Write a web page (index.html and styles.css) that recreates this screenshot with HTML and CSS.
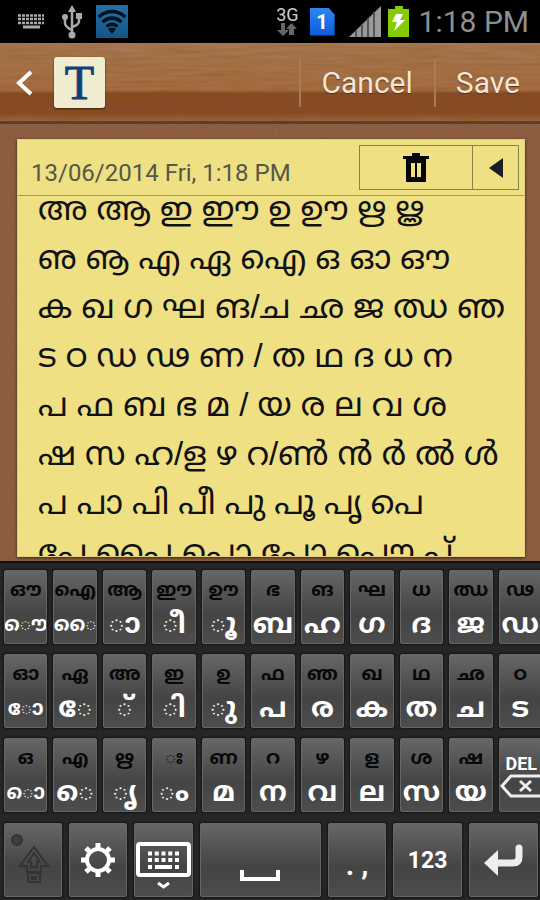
FILE: index.html
```html
<!DOCTYPE html>
<html lang="ml">
<head>
  <meta charset="UTF-8">
  <meta name="viewport" content="width=device-width, initial-scale=1.0">
  <title>Memo</title>
  <link rel="stylesheet" href="styles.css">
</head>
<body>
  <!-- Status bar -->
  <div class="status">
    <svg width="28" height="16" viewBox="0 0 28 16" fill="none" stroke="#aaa">
      <path d="M1 1.5h26M1 5h26M1 9h26" stroke-width="2.5" stroke-dasharray="3 1"/>
      <path d="M6 13h17" stroke-width="3"/>
    </svg>
    <svg class="usb" width="20" height="34" viewBox="0 0 20 34" fill="none" stroke="#aaa" stroke-width="2.5">
      <path d="M10 5v24M3 13v5q0 4 7 7M17 11v5q0 4-7 6"/>
      <path d="M10 0l4 7H6z" fill="#aaa" stroke="none"/>
      <circle cx="10" cy="30" r="3.5" fill="#aaa" stroke="none"/>
      <circle cx="3" cy="12" r="3" fill="#aaa" stroke="none"/>
      <path d="M14 8h6v6h-6z" fill="#aaa" stroke="none"/>
    </svg>
    <svg class="wifi" width="32" height="33" viewBox="0 0 32 33" fill="none" stroke="#03101c" stroke-width="3.5">
      <path d="M2.500 12q13.500-11 27 0M6.500 17q9.500-8 19 0M10.500 21.500q5.500-4.500 11 0"/>
      <path d="M12 24q4-3 8 0l-4 5z" fill="#03101c" stroke="none"/>
    </svg>
    <div class="network">
      <span>3G</span>
      <svg width="20" height="13" viewBox="0 0 20 13" fill="#666">
        <path d="M4 0h4v7h4l-6 6-6-6h4zM12 12V6H9l5.500-6L20 6h-3v6z"/>
      </svg>
    </div>
    <div class="sim">1</div>
    <svg class="signal" width="32" height="31" viewBox="0 0 32 31">
      <path d="M0 31L32 0v31z" fill="#999"/>
      <path d="M7 24v7M13 18v13M19 12v19M25 6v25" stroke="#555" stroke-width="2"/>
    </svg>
    <svg width="21" height="31" viewBox="0 0 21 31">
      <path d="M7 0h8v3h6v28H0V3h7z" fill="#86cc05"/>
      <path d="M8 8h7l-3 6h5L6 25l3-9H4z" fill="#fff"/>
    </svg>
    <time class="clock">1:18 PM</time>
  </div>

  <!-- Action bar -->
  <header class="bar">
    <button class="back" aria-label="Back">
      <svg width="17" height="26" viewBox="0 0 17 26" fill="none" stroke="#fff" stroke-width="4"><path d="M15 2L3 13l12 11"/></svg>
    </button>
    <button class="mode" aria-label="Text mode">T</button>
    <button class="action cancel">Cancel</button>
    <button class="action save">Save</button>
  </header>

  <!-- Note -->
  <main class="board">
    <section class="note">
      <div class="note-head">
        <label class="date" for="memo">13/06/2014 Fri, 1:18 PM</label>
        <div class="tools">
          <button class="trash" aria-label="Delete">
            <svg width="26" height="29" viewBox="0 0 26 29">
              <path d="M9 0h8v3h9v3h-3v23H3V6H0V3h9z" fill="#050505"/>
              <path d="M8 10h4v14H8zM14 10h4v14h-4z" fill="#efe083"/>
            </svg>
          </button>
          <button class="prev" aria-label="Previous">
            <svg width="14" height="20" viewBox="0 0 14 20"><path d="M14 0v20L0 10z" fill="#1b1d25"/></svg>
          </button>
        </div>
      </div>
      <textarea class="memo" id="memo" spellcheck="false">അ ആ ഇ ഈ ഉ ഊ ഋ ൠ
ഌ ൡ എ ഏ ഐ ഒ ഓ ഔ
ക ഖ ഗ ഘ ങ/ച ഛ ജ ഝ ഞ
ട ഠ ഡ ഢ ണ / ത ഥ ദ ധ ന
പ ഫ ബ ഭ മ / യ ര ല വ ശ
ഷ സ ഹ/ള ഴ റ/ൺ ൻ ർ ൽ ൾ
പ പാ പി പീ പു പൂ പൃ പെ
പേ പൈ പൊ പോ പൌ പ്</textarea>
    </section>
  </main>

  <!-- Keyboard -->
  <div class="keyboard">
    <div class="letters">
      <button class="key"><small>ഔ</small><b class="wide">ൌ</b></button>
      <button class="key"><small>ഐ</small><b class="wide">ൈ</b></button>
      <button class="key"><small>ആ</small><b>ാ</b></button>
      <button class="key"><small>ഈ</small><b>ീ</b></button>
      <button class="key"><small>ഊ</small><b>ൂ</b></button>
      <button class="key"><small>ഭ</small><b>ബ</b></button>
      <button class="key"><small>ങ</small><b>ഹ</b></button>
      <button class="key"><small>ഘ</small><b>ഗ</b></button>
      <button class="key"><small>ധ</small><b>ദ</b></button>
      <button class="key"><small>ഝ</small><b>ജ</b></button>
      <button class="key"><small>ഢ</small><b>ഡ</b></button>

      <button class="key"><small>ഓ</small><b class="wide">ോ</b></button>
      <button class="key"><small>ഏ</small><b>േ</b></button>
      <button class="key"><small>അ</small><b>്</b></button>
      <button class="key"><small>ഇ</small><b>ി</b></button>
      <button class="key"><small>ഉ</small><b>ു</b></button>
      <button class="key"><small>ഫ</small><b>പ</b></button>
      <button class="key"><small>ഞ</small><b>ര</b></button>
      <button class="key"><small>ഖ</small><b>ക</b></button>
      <button class="key"><small>ഥ</small><b>ത</b></button>
      <button class="key"><small>ഛ</small><b>ച</b></button>
      <button class="key"><small>ഠ</small><b>ട</b></button>

      <button class="key"><small>ഒ</small><b class="wide">ൊ</b></button>
      <button class="key"><small>എ</small><b>െ</b></button>
      <button class="key"><small>ഋ</small><b>ൃ</b></button>
      <button class="key"><small>ഃ</small><b>ം</b></button>
      <button class="key"><small>ണ</small><b>മ</b></button>
      <button class="key"><small>റ</small><b>ന</b></button>
      <button class="key"><small>ഴ</small><b>വ</b></button>
      <button class="key"><small>ള</small><b>ല</b></button>
      <button class="key"><small>ശ</small><b>സ</b></button>
      <button class="key"><small>ഷ</small><b>യ</b></button>
      <button class="key del">
        <span>DEL</span>
        <svg width="48" height="24" viewBox="0 0 48 24" fill="none" stroke="#eee" stroke-width="3">
          <path d="M2 12L11 2h36v20H11z"/>
          <path d="M20 7l11 10M31 7L20 17"/>
        </svg>
      </button>
    </div>

    <div class="bottom">
      <button class="key shift" aria-label="Shift">
        <svg width="44" height="54" viewBox="0 0 44 54" fill="none" stroke="#333" stroke-width="2">
          <circle cx="6" cy="7" r="5" fill="#3d3d3d"/>
          <path d="M23 14l14 19h-7v6H16v-6H9z"/>
          <path d="M23 20l6 9h-3v5h-6v-5h-3zM17 40h12v9H17zM21 44h4v2h-4z"/>
        </svg>
      </button>
      <button class="key" aria-label="Settings">
        <svg width="36" height="36" viewBox="-18 -18 36 36" fill="none" stroke="#fff">
          <circle r="11" stroke-width="4"/>
          <path d="M0-12v-5M0 12v5M-12 0h-5M12 0h5M-9-9l-3-3M9-9l3-3M-9 9l-3 3M9 9l3 3" stroke-width="5"/>
        </svg>
      </button>
      <button class="key hide" aria-label="Hide keyboard">
        <svg width="55" height="49" viewBox="0 0 55 49" fill="none" stroke="#fff">
          <rect x="2" y="2" width="51" height="31" rx="2" stroke-width="4"/>
          <path d="M12 11.500h31M12 18h31" stroke-width="4" stroke-dasharray="4 2.750"/>
          <path d="M12 25h4M19 25h17M39 25h4" stroke-width="4"/>
          <path d="M22 41l5.500 4 5.500-4" stroke-width="3"/>
        </svg>
      </button>
      <button class="key space" aria-label="Space">
        <svg width="40" height="11" viewBox="0 0 40 11" fill="none" stroke="#fff" stroke-width="4"><path d="M2 0v9h36V0"/></svg>
      </button>
      <button class="key punct">. ,</button>
      <button class="key digits">123</button>
      <button class="key enter" aria-label="Enter">
        <svg width="40" height="33" viewBox="0 0 40 33">
          <path d="M35 4v9q0 6-6 6H11" fill="none" stroke="#eee" stroke-width="7" stroke-linecap="round"/>
          <path d="M0 19L14 6v26z" fill="#eee"/>
        </svg>
      </button>
    </div>
  </div>

  <script>
    // reopen the memo a little below its first line
    document.getElementById("memo").scrollTop = 12;
  </script>
</body>
</html>
```
FILE: styles.css
```css
* {
  box-sizing: border-box;
}

body {
  margin: 0;
  height: 100vh;
  display: flex;
  flex-direction: column;
  overflow: hidden;
  background: #000;
  font-family: Roboto, "Noto Sans Malayalam", sans-serif;
}

button {
  margin: 0;
  padding: 0;
  border: 0;
  background: none;
  font-family: inherit;
  color: inherit;
  cursor: pointer;
}

svg {
  display: block;
  flex: none;
}

/* Status bar */
.status {
  flex: none;
  display: flex;
  align-items: center;
  height: 43px;
  padding: 0 11px 0 17px;
}

.usb {
  margin: 0 14px 0 17px;
}

.wifi {
  background: linear-gradient(#2470a8, #135587);
}

.network {
  margin-left: auto;
  display: flex;
  flex-direction: column;
  align-items: center;
  color: #ccc;
  font-size: 18px;
  line-height: 16px;
}

.sim {
  width: 25px;
  height: 28px;
  margin: 0 14px 0 11px;
  background: linear-gradient(#2e86ee, #0b5be0);
  clip-path: polygon(0 0, 75% 0, 100% 25%, 100% 100%, 0 100%);
  color: #fff;
  font-size: 20px;
  font-weight: bold;
  line-height: 28px;
  text-align: center;
}

.signal {
  margin-right: 7px;
}

.clock {
  margin-left: 10px;
  color: #8f8f8f;
  font-size: 30px;
}

/* Action bar */
.bar {
  flex: none;
  display: flex;
  align-items: center;
  height: 81px;
  border-top: 1px solid #a87a54;
  border-bottom: 3px solid #59402c;
  background:
    url("data:image/svg+xml,%3Csvg xmlns='http://www.w3.org/2000/svg' width='540' height='80'%3E%3Cfilter id='g'%3E%3CfeTurbulence type='fractalNoise' baseFrequency='.02 .3' numOctaves='3'/%3E%3CfeColorMatrix values='0 0 0 0 .2 0 0 0 0 .08 0 0 0 0 0 .5 0 0 0 -.13'/%3E%3C/filter%3E%3Crect width='540' height='80' filter='url(%23g)'/%3E%3C/svg%3E"),
    linear-gradient(#a87856, #a66d45 60%, #874a2a 64%, #8a4a29 90%, #9b6540);
}

.back {
  padding: 0 14px 0 16px;
}

.mode {
  width: 51px;
  height: 51px;
  margin-left: 7px;
  border-radius: 3px;
  background: #efecd0;
  box-shadow: 0 1px 2px #3a1c08;
  color: #123f79;
  font-family: "Liberation Serif", serif;
  font-size: 48px;
  line-height: 50px;
  -webkit-text-stroke: 1px #123f79;
}

.action {
  height: 48px;
  border-left: 2px solid #a77b57;
  color: #f5e6da;
  font-size: 30px;
  text-shadow: 0 1px 1px #5a2f12;
}

.cancel {
  margin-left: auto;
  padding: 0 21px;
}

.save {
  padding: 0 20px;
}

/* Note on the board */
.board {
  flex: 1;
  min-height: 0;
  padding: 15px 15px 4px 17px;
  background:
    url("data:image/svg+xml,%3Csvg xmlns='http://www.w3.org/2000/svg' width='300' height='300'%3E%3Cfilter id='c'%3E%3CfeTurbulence type='fractalNoise' baseFrequency='.45' numOctaves='2' stitchTiles='stitch'/%3E%3CfeColorMatrix values='0 0 0 0 .2 0 0 0 0 .1 0 0 0 0 .04 .9 0 0 0 -.25'/%3E%3C/filter%3E%3Crect width='300' height='300' filter='url(%23c)'/%3E%3C/svg%3E"),
    #8f5f41;
}

.note {
  display: flex;
  flex-direction: column;
  height: 100%;
  border: 1px solid #e5cf83;
  background: #efe083;
  box-shadow: 0 1px 3px #3b2413;
}

.note-head {
  flex: none;
  display: flex;
  align-items: flex-start;
  justify-content: space-between;
  height: 56px;
  padding: 5px 5px 0 13px;
  border-bottom: 1px solid #a69a55;
}

.date {
  padding-top: 14px;
  color: #555749;
  font-size: 24px;
  line-height: 28px;
}

.tools {
  display: flex;
  height: 45px;
  border: 1px solid #8e803d;
}

.tools button {
  display: flex;
  align-items: center;
  justify-content: center;
}

.trash {
  width: 112px;
}

.prev {
  width: 46px;
  border-left: 1px solid #8e803d;
}

.memo {
  flex: 1;
  min-height: 0;
  padding: 0 10px 0 20px;
  border: 0;
  outline: 0;
  resize: none;
  background: transparent;
  color: #111;
  font-family: "Liberation Sans", "Noto Sans Malayalam", sans-serif;
  font-size: 33px;
  line-height: 49px;
  white-space: pre;
  overflow: hidden;
}

/* Keyboard */
.keyboard {
  flex: none;
  padding: 7px 0 3px 4px;
  border-top: 2px solid #111;
  background: #262626;
  overflow: hidden;
}

/* the last column runs slightly past the edge */
.letters {
  display: grid;
  grid-template-columns: repeat(11, minmax(0, 1fr));
  gap: 10px 6px;
  margin-right: -2px;
}

.key {
  display: flex;
  flex-direction: column;
  align-items: center;
  justify-content: center;
  height: 74px;
  border: 1px solid #676767;
  border-radius: 2px;
  background: linear-gradient(#666, #444 60%, #4d4d4d);
  box-shadow: 0 0 2px 1px #141414;
  color: #fff;
  overflow: hidden;
}

.key small {
  color: #080808;
  font-size: 19px;
  font-weight: bold;
  line-height: 34px;
  white-space: nowrap;
}

.key b {
  font-size: 28px;
  line-height: 34px;
  white-space: nowrap;
}

.key .wide {
  font-size: 20px;
}

.del {
  align-items: flex-start;
  font-size: 18px;
  font-weight: bold;
}

.del span {
  padding-left: 6px;
}

.bottom {
  display: flex;
  gap: 7px;
  margin-top: 11px;
  padding-right: 2px;
}

.bottom .key {
  flex: 58;
}

.bottom .space {
  flex: 123;
  justify-content: flex-end;
  padding-bottom: 15px;
}

.bottom .digits,
.bottom .enter {
  flex: 69;
}

.hide {
  padding-top: 12px;
}

.digits {
  font-size: 23px;
  font-weight: bold;
}

.punct {
  padding-top: 10px;
  font-size: 29px;
  font-weight: bold;
}
```
